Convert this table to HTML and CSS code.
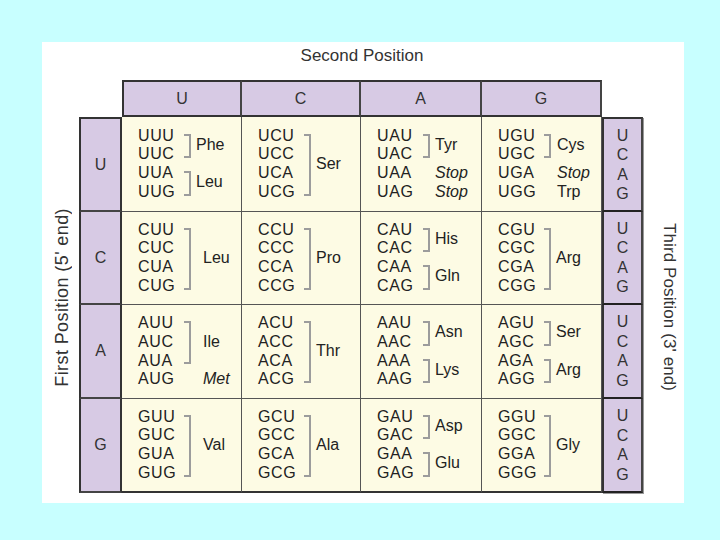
FILE: index.html
```html
<!DOCTYPE html>
<html>
<head>
<meta charset="utf-8">
<link rel="stylesheet" href="styles.css">
</head>
<body>
<div class="panel">
  <div class="title">Second Position</div>

  <div class="hd hd-first col-u">U</div>
  <div class="hd col-c">C</div>
  <div class="hd col-a">A</div>
  <div class="hd col-g">G</div>

  <div class="side-left">First Position (5' end)</div>
  <div class="side-right">Third Position (3' end)</div>

  <div class="fp fp-first row-u">U</div>
  <div class="fp row-c">C</div>
  <div class="fp row-a">A</div>
  <div class="fp row-g">G</div>

  <!-- Row U -->
  <div class="cell row-u col-u">
    <div class="cds">UUU<br>UUC<br>UUA<br>UUG</div>
    <div class="br s12"></div><div class="aa s12">Phe</div>
    <div class="br s34"></div><div class="aa s34">Leu</div>
  </div>
  <div class="cell row-u col-c">
    <div class="cds">UCU<br>UCC<br>UCA<br>UCG</div>
    <div class="br s14"></div><div class="aa s14">Ser</div>
  </div>
  <div class="cell row-u col-a">
    <div class="cds">UAU<br>UAC<br>UAA<br>UAG</div>
    <div class="br s12"></div><div class="aa s12">Tyr</div>
    <div class="aa r3 it">Stop</div>
    <div class="aa r4 it">Stop</div>
  </div>
  <div class="cell row-u col-g">
    <div class="cds">UGU<br>UGC<br>UGA<br>UGG</div>
    <div class="br s12"></div><div class="aa s12 far">Cys</div>
    <div class="aa r3 it far">Stop</div>
    <div class="aa r4 far">Trp</div>
  </div>

  <!-- Row C -->
  <div class="cell row-c col-u">
    <div class="cds">CUU<br>CUC<br>CUA<br>CUG</div>
    <div class="br s14"></div><div class="aa s14 wide">Leu</div>
  </div>
  <div class="cell row-c col-c">
    <div class="cds">CCU<br>CCC<br>CCA<br>CCG</div>
    <div class="br s14"></div><div class="aa s14">Pro</div>
  </div>
  <div class="cell row-c col-a">
    <div class="cds">CAU<br>CAC<br>CAA<br>CAG</div>
    <div class="br s12"></div><div class="aa s12">His</div>
    <div class="br s34"></div><div class="aa s34">Gln</div>
  </div>
  <div class="cell row-c col-g">
    <div class="cds">CGU<br>CGC<br>CGA<br>CGG</div>
    <div class="br s14"></div><div class="aa s14">Arg</div>
  </div>

  <!-- Row A -->
  <div class="cell row-a col-u">
    <div class="cds">AUU<br>AUC<br>AUA<br>AUG</div>
    <div class="br s13"></div><div class="aa s13 wide">Ile</div>
    <div class="aa r4 it wide">Met</div>
  </div>
  <div class="cell row-a col-c">
    <div class="cds">ACU<br>ACC<br>ACA<br>ACG</div>
    <div class="br s14"></div><div class="aa s14">Thr</div>
  </div>
  <div class="cell row-a col-a">
    <div class="cds">AAU<br>AAC<br>AAA<br>AAG</div>
    <div class="br s12"></div><div class="aa s12">Asn</div>
    <div class="br s34"></div><div class="aa s34">Lys</div>
  </div>
  <div class="cell row-a col-g">
    <div class="cds">AGU<br>AGC<br>AGA<br>AGG</div>
    <div class="br s12"></div><div class="aa s12">Ser</div>
    <div class="br s34"></div><div class="aa s34">Arg</div>
  </div>

  <!-- Row G -->
  <div class="cell row-g col-u last">
    <div class="cds">GUU<br>GUC<br>GUA<br>GUG</div>
    <div class="br s14"></div><div class="aa s14 wide">Val</div>
  </div>
  <div class="cell row-g col-c last">
    <div class="cds">GCU<br>GCC<br>GCA<br>GCG</div>
    <div class="br s14"></div><div class="aa s14">Ala</div>
  </div>
  <div class="cell row-g col-a last">
    <div class="cds">GAU<br>GAC<br>GAA<br>GAG</div>
    <div class="br s12"></div><div class="aa s12">Asp</div>
    <div class="br s34"></div><div class="aa s34">Glu</div>
  </div>
  <div class="cell row-g col-g last">
    <div class="cds">GGU<br>GGC<br>GGA<br>GGG</div>
    <div class="br s14"></div><div class="aa s14">Gly</div>
  </div>

  <div class="tp tp-first row-u"><span>U</span><span>C</span><span>A</span><span>G</span></div>
  <div class="tp row-c"><span>U</span><span>C</span><span>A</span><span>G</span></div>
  <div class="tp row-a"><span>U</span><span>C</span><span>A</span><span>G</span></div>
  <div class="tp row-g"><span>U</span><span>C</span><span>A</span><span>G</span></div>
</div>
</body>
</html>
```

FILE: styles.css
```css
* { box-sizing: border-box; }

html, body {
  margin: 0;
  padding: 0;
}

body {
  background: #c8ffff;
  width: 720px;
  height: 540px;
  padding: 42px 0 0 42px;
  font-family: "Liberation Sans", Arial, sans-serif;
  color: #222;
}

.panel {
  width: 642px;
  height: 461px;
  background: #ffffff;
  display: grid;
  grid-template-columns: 37px 43px 120px 119px 121px 120px 41px 41px;
  grid-template-rows: 38px 37px 95px 93px 94px 94px 10px;
}

.title {
  grid-column: 3 / 7;
  grid-row: 1;
  text-align: center;
  font-size: 17px;
  line-height: 20px;
  padding-top: 4px;
  color: #333;
}

/* placement */
.col-u { grid-column: 3; }
.col-c { grid-column: 4; }
.col-a { grid-column: 5; }
.col-g { grid-column: 6; }
.row-u { grid-row: 3; }
.row-c { grid-row: 4; }
.row-a { grid-row: 5; }
.row-g { grid-row: 6; }

.hd {
  grid-row: 2;
  background: #d7cae4;
  border-top: 2px solid #333;
  border-bottom: 2px solid #333;
  border-right: 2px solid #444;
  display: flex;
  align-items: center;
  justify-content: center;
  font-size: 16px;
  color: #333;
}
.hd-first { border-left: 2px solid #333; }

.fp {
  grid-column: 2;
  background: #d7cae4;
  border-left: 2px solid #333;
  border-right: 2px solid #333;
  border-bottom: 2px solid #444;
  display: flex;
  align-items: center;
  justify-content: center;
  font-size: 16px;
  color: #333;
}
.fp-first { border-top: 2px solid #333; }

.tp {
  grid-column: 7;
  background: #d7cae4;
  border-left: 2px solid #333;
  border-right: 2px solid #444;
  border-bottom: 2px solid #222;
  display: flex;
  flex-direction: column;
  align-items: center;
  justify-content: center;
  font-size: 16px;
  line-height: 19.5px;
  color: #333;
  box-shadow: 1px 1px 0 #999;
}
.tp-first { border-top: 2px solid #333; }

.side-left {
  grid-column: 1;
  grid-row: 3 / 7;
  writing-mode: vertical-rl;
  transform: rotate(180deg);
  justify-self: center;
  align-self: center;
  font-size: 18px;
  letter-spacing: 0.4px;
  color: #333;
  margin-left: 4px;
  margin-bottom: 15px;
}

.side-right {
  grid-column: 8;
  grid-row: 3 / 7;
  writing-mode: vertical-rl;
  justify-self: center;
  align-self: center;
  font-size: 17px;
  letter-spacing: 0.1px;
  color: #333;
  margin-left: 10px;
  margin-top: 4px;
}

.cell {
  background: #fdfbe4;
  border-right: 1.5px solid #555;
  border-bottom: 1.5px solid #555;
  display: grid;
  grid-template-columns: 46px 7px 1fr;
  grid-template-rows: repeat(4, 18.75px);
  align-content: center;
  padding-left: 16px;
  font-size: 16px;
}
.cell.last { border-bottom: 2px solid #333; }

.cds {
  grid-column: 1;
  grid-row: 1 / 5;
  line-height: 18.75px;
  letter-spacing: 0.6px;
  white-space: nowrap;
}

.br {
  grid-column: 2;
  border: 2px solid #9c9c9c;
  border-left: none;
  margin: 7px 0 6px 0;
}

.aa {
  grid-column: 3;
  align-self: center;
  padding-left: 5px;
  line-height: 18.75px;
  white-space: nowrap;
}
.aa.wide { padding-left: 12px; }
.aa.far { padding-left: 6px; }
.it { font-style: italic; }

.s12 { grid-row: 1 / 3; }
.s34 { grid-row: 3 / 5; }
.s14 { grid-row: 1 / 5; }
.s13 { grid-row: 1 / 4; }
.r3 { grid-row: 3; }
.r4 { grid-row: 4; }
```
